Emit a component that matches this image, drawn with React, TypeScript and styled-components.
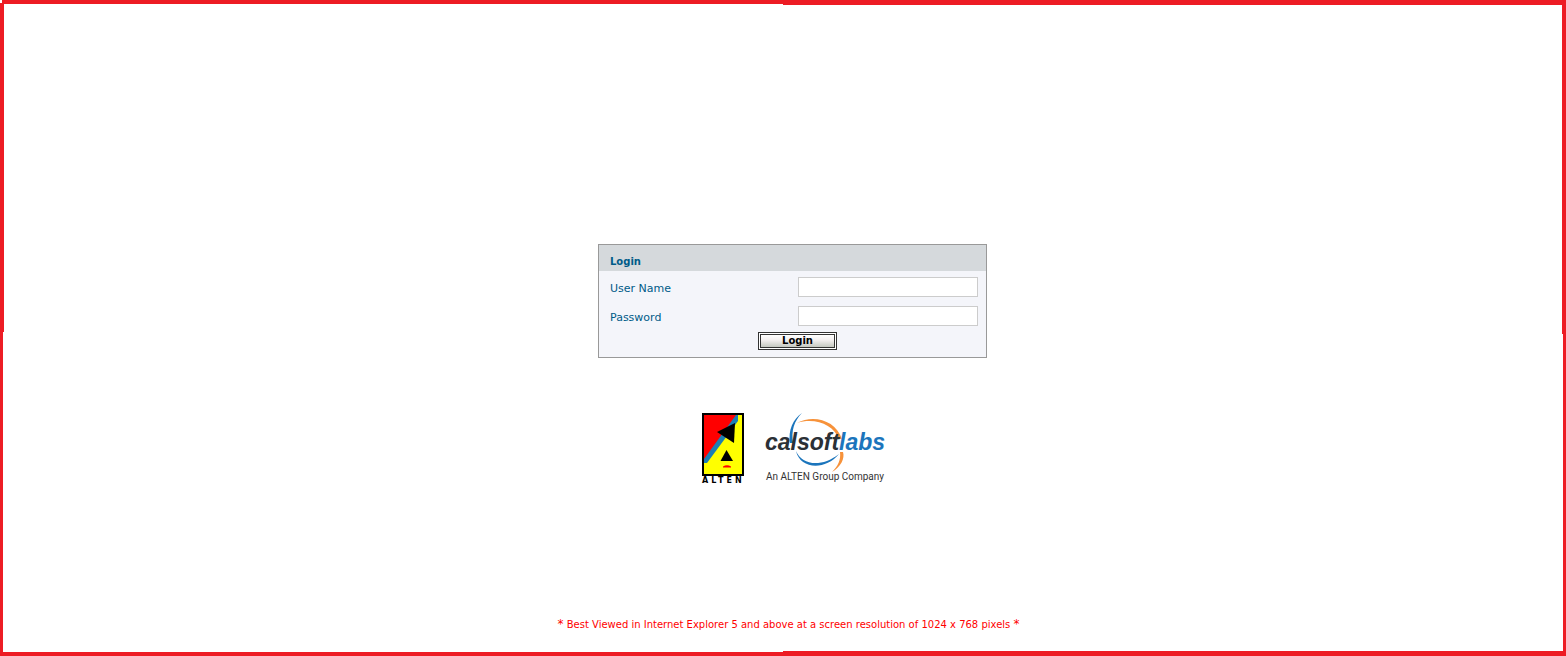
import React, { useState } from "react";
import styled, { createGlobalStyle } from "styled-components";

const GlobalStyle = createGlobalStyle`
  *, *::before, *::after { box-sizing: border-box; }
  body {
    margin: 0;
    background: #ffffff;
    font-family: "DejaVu Sans", Verdana, sans-serif;
    font-size: 10px;
  }
`;

const red = "linear-gradient(#ed1c24, #ed1c24)";

const Page = styled.div`
  min-height: 100vh;
  display: flex;
  flex-direction: column;
  align-items: center;
  padding: 244px 4px 23px 23px;
  background-color: #ffffff;
  background-repeat: no-repeat;
  background-image: ${Array(8).fill(red).join(", ")};
  background-position: 2px 0, right top, left 3px, left bottom, right top, right bottom, left bottom, right bottom;
  background-size:
    100% 4px,
    50% 5px,
    4px calc(50% + 1px),
    3px 50%,
    4px calc(50% + 6px),
    3px 50%,
    100% 4px,
    50% 5px;
`;

const Panel = styled.form`
  width: 389px;
  max-width: 100%;
  border: 1px solid #999999;
  background: #f4f5fa;
  color: #005b88;
`;

const PanelTitle = styled.h1`
  margin: 0;
  padding: 11px 11px 3px;
  background: #d5d9dc;
  font-size: 10px;
  line-height: 12px;
  font-weight: bold;
`;

const Fields = styled.div`
  display: flex;
  flex-direction: column;
  gap: 9px;
  padding: 6px 8px 6px 11px;
`;

const Field = styled.div`
  display: flex;
  align-items: center;
  justify-content: space-between;
`;

const FieldLabel = styled.label`
  padding-top: 3px;
  font-size: 11px;
  line-height: 12px;
`;

const FieldInput = styled.input`
  width: 180px;
  height: 20px;
  padding: 2px 4px;
  border: 1px solid #cccccc;
  background: #ffffff;
  font: inherit;
  outline: none;
`;

const Actions = styled.div`
  display: flex;
  justify-content: center;
  padding: 0 0 7px 10px;
`;

const LoginButton = styled.button`
  width: 79px;
  height: 18px;
  padding: 0;
  border: 3px double #333333;
  background: linear-gradient(#ffffff, #f4f0f0 40%, #c4c8c0) padding-box, #ffffff;
  color: #000000;
  font: inherit;
  font-weight: bold;
  line-height: 12px;
`;

const Logos = styled.div`
  display: flex;
  gap: 20px;
  margin-top: 54px;
`;

const Notice = styled.p`
  margin: auto 8px 0 0;
  color: #ff0000;
  line-height: 16px;
`;

const Star = styled.span`
  font-size: 12px;
`;

function AltenLogo() {
  return (
    <svg width="44" height="74" viewBox="0 0 44 74" role="img" aria-label="Alten">
      <rect x="1" y="1" width="42" height="63" fill="#000000" />
      <rect x="3" y="3" width="38" height="59" fill="#ffff00" />
      <path d="M3 3H36L3 49Z" fill="#ff0000" />
      <path d="M35 3H37V9L6 51H3V47Z" fill="#1c7fb5" />
      <path d="M16 20L34 11L33 31Z" fill="#000000" />
      <path d="M25.500 38L32 49H19.500Z" fill="#000000" />
      <path d="M22 54.500Q26 52 30 54.500V55.500H22Z" fill="#ff0000" />
      <text x="1" y="71" fontFamily="DejaVu Sans, sans-serif" fontWeight="bold" fontSize="8" letterSpacing="3">
        ALTEN
      </text>
    </svg>
  );
}

function CalsoftLogo() {
  return (
    <svg width="120" height="74" viewBox="0 0 120 74" role="img" aria-label="Calsoft Labs">
      <path d="M37 1C28 7 23 18 25 31L28 31C26 19 29 9 37 1Z" fill="#1b75bc" />
      <path d="M32 11C50 5 69 13 74 27L77 27C71 8 48 2 32 11Z" fill="#f7923a" />
      <path d="M78 40C80 46 76 55 67 60C73 54 76 48 75 40Z" fill="#f7923a" />
      <path d="M31 39C37 53 56 56 74 42C60 59 35 57 31 39Z" fill="#1b75bc" />
      <g fontFamily="Liberation Sans, Arial, sans-serif" fontWeight="bold" fontStyle="italic" fontSize="23">
        <text x="0" y="38" fill="#2b3036">calsoft</text>
        <text x="74" y="38" fill="#1b75bc">labs</text>
      </g>
      <text x="1" y="68" fontFamily="Roboto, sans-serif" fontSize="10" fill="#333333">
        An ALTEN Group Company
      </text>
    </svg>
  );
}

export default function App() {
  const [user, setUser] = useState("");
  const [password, setPassword] = useState("");

  return (
    <>
      <GlobalStyle />
      <Page>
        <Panel onSubmit={(e) => e.preventDefault()}>
          <PanelTitle>Login</PanelTitle>
          <Fields>
            <Field>
              <FieldLabel htmlFor="user">User Name</FieldLabel>
              <FieldInput id="user" value={user} onChange={(e) => setUser(e.target.value)} />
            </Field>
            <Field>
              <FieldLabel htmlFor="password">Password</FieldLabel>
              <FieldInput
                id="password"
                type="password"
                value={password}
                onChange={(e) => setPassword(e.target.value)}
              />
            </Field>
          </Fields>
          <Actions>
            <LoginButton type="submit">Login</LoginButton>
          </Actions>
        </Panel>
        <Logos>
          <AltenLogo />
          <CalsoftLogo />
        </Logos>
        <Notice>
          <Star>*</Star> Best Viewed in Internet Explorer 5 and above at a screen resolution of 1024 x 768
          pixels <Star>*</Star>
        </Notice>
      </Page>
    </>
  );
}
